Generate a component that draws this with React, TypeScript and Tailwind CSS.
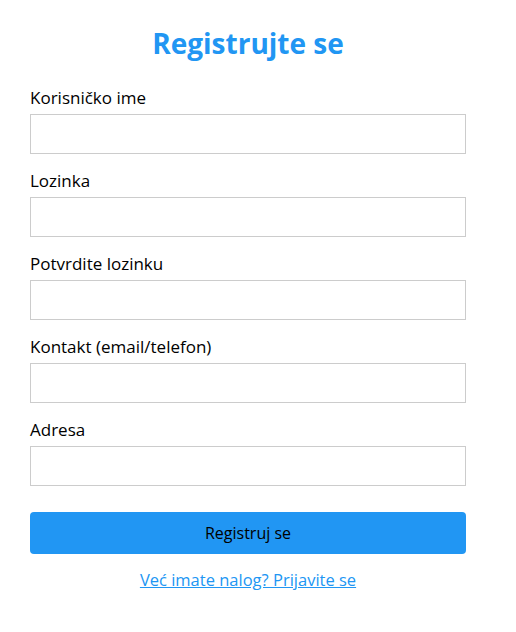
export default function App() {
  return (
    <div className="min-h-screen bg-white font-['Segoe_UI','Open_Sans',sans-serif] text-black">
      <div className="w-[436px] ml-[30px] pt-[24px]">
        <h1 className="text-center text-[28px] font-bold leading-[38px] text-[#2196f3] mb-[24px]">
          Registrujte se
        </h1>
        <form onSubmit={(e) => e.preventDefault()}>
          {['Korisničko ime', 'Lozinka', 'Potvrdite lozinku', 'Kontakt (email/telefon)', 'Adresa'].map((label, i) => (
            <div key={label} className="mb-[15px]">
              <label className="block text-[17px] leading-[24px] mb-[4px]">{label}</label>
              <input
                type={i === 1 || i === 2 ? 'password' : 'text'}
                className="block w-full h-[40px] border border-[#ccc] bg-white outline-none px-2"
              />
            </div>
          ))}
          <button
            type="submit"
            className="mt-[11px] w-full h-[42px] rounded-[4px] bg-[#2196f3] text-[16px] text-black"
          >
            Registruj se
          </button>
          <p className="text-center mt-[14px]">
            <a href="#" className="text-[#2196f3] underline text-[16.5px]">
              Već imate nalog? Prijavite se
            </a>
          </p>
        </form>
      </div>
    </div>
  );
}
